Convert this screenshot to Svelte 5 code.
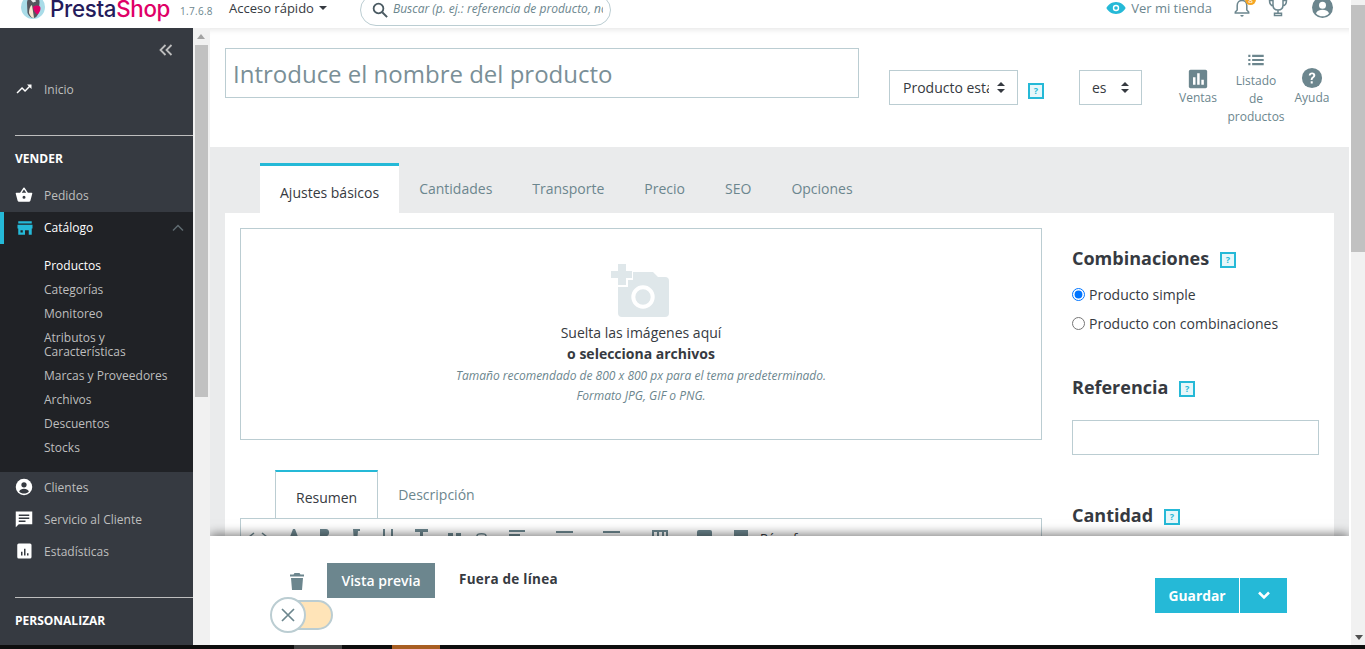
<script>
  const tabs = ['Cantidades', 'Transporte', 'Precio', 'SEO', 'Opciones'];
  const sub = ['Categorías', 'Monitoreo', 'Atributos y Características', 'Marcas y Proveedores', 'Archivos', 'Descuentos', 'Stocks'];
</script>

<div class="page">
  <div class="window">
    <div class="app">
      <header class="top">
        <div class="logo">
          <svg width="24" height="24" viewBox="0 0 24 24"><circle cx="12" cy="12" r="12" fill="#a9dce8"/><path d="M6 8c0-4 3-7 6.500-7S19 4 18.500 8l-1 10c-1 3-3 5-5 5s-5-2-6-5z" fill="#55565e"/><path d="M8 18c0-4 1-7 3-8l2 13c-2 0-4-2-5-5z" fill="#f6e7cf"/><path d="M12 12c2-2 5-2 7-.5 1 2 .500 5-2.500 8-2-1-4-4-4.500-7.500z" fill="#df0067"/><path d="M9 4h5l1 2.500-3 1z" fill="#ececec"/></svg>
          <span class="brand"><b class="p">Presta</b><b class="s">Shop</b></span>
        </div>
        <span class="ver">1.7.6.8</span>
        <span class="quick">Acceso rápido<i class="caret"></i></span>
        <div class="search">
          <svg width="18" height="18" viewBox="0 0 24 24"><circle cx="10" cy="10" r="6.500" fill="none" stroke="#4a5a62" stroke-width="2.400"/><path d="M15 15l6.500 6.500" stroke="#4a5a62" stroke-width="2.600"/></svg>
          <span class="sq">Buscar (p. ej.: referencia de producto, nombre de cliente...)</span>
        </div>
        <div class="top-right">
          <svg class="eye" width="20" height="14" viewBox="0 0 20 14"><path d="M10 1C5.500 1 2 3.800.4 7 2 10.200 5.500 13 10 13s8-2.800 9.600-6C18 3.800 14.500 1 10 1z" fill="#25b9d7"/><circle cx="10" cy="7" r="3.200" fill="#fff"/><circle cx="10" cy="7" r="1.800" fill="#25b9d7"/></svg>
          <span class="view">Ver mi tienda</span>
          <span class="bell">
            <svg width="18" height="20" viewBox="0 0 18 20"><path d="M9 2.500c-3 0-4.800 2.300-4.800 5v4.500L2.300 14v1h13.400v-1l-1.900-2V7.500c0-2.700-1.800-5-4.800-5z" fill="none" stroke="#6c868e" stroke-width="1.500"/><path d="M7.300 17h3.400a1.700 1.700 0 0 1-3.400 0z" fill="#6c868e"/></svg>
            <em>8</em>
          </span>
          <svg class="trophy" width="20" height="19" viewBox="0 0 20 19"><path d="M5 1h10v6c0 3-2 5-5 5s-5-2-5-5z M5 2.500H1.500c0 3 1 5 3.800 5.500 M15 2.500h3.500c0 3-1 5-3.800 5.500 M10 12v3 M6.500 17.500v-2.300h7v2.300z" fill="none" stroke="#6c868e" stroke-width="1.500"/></svg>
          <svg class="user" width="21" height="21" viewBox="0 0 24 24"><circle cx="12" cy="12" r="12" fill="#6c868e"/><circle cx="12" cy="9.500" r="4" fill="#fff"/><path d="M4.500 18.500c1.500-3 4.500-4 7.500-4s6 1 7.500 4C17.500 21 15 22 12 22s-5.500-1-7.500-3.500z" fill="#fff"/></svg>
        </div>
      </header>

      <div class="body">
        <aside class="side">
          <div class="collapse">
            <svg width="14" height="12" viewBox="0 0 14 12"><path d="M6.500 1L1.500 6l5 5M12.500 1l-5 5 5 5" fill="none" stroke="#bebebe" stroke-width="1.800"/></svg>
          </div>
          <div class="item first">
            <svg width="18" height="18" viewBox="0 0 24 24"><path d="M16 6l2.300 2.300-4.900 4.900-4-4L2 16.600 3.400 18l6-6 4 4 6.300-6.300L22 12V6z" fill="#fff"/></svg>
            <span>Inicio</span>
          </div>
          <div class="rule"></div>
          <h3 class="sect">VENDER</h3>
          <div class="item">
            <svg width="18" height="18" viewBox="0 0 24 24"><path d="M17.200 9l-4.400-6.600a1 1 0 0 0-1.600 0L6.800 9H2a1 1 0 0 0-1 1.300l2.500 9.200A2 2 0 0 0 5.500 21h13a2 2 0 0 0 2-1.500l2.500-9.200A1 1 0 0 0 22 9zM9 9l3-4.400L15 9zm3 8a2 2 0 1 1 0-4 2 2 0 0 1 0 4z" fill="#fff"/></svg>
            <span>Pedidos</span>
          </div>
          <div class="active">
            <div class="item cat">
              <svg width="18" height="18" viewBox="0 0 24 24"><path d="M3 3h18v3H3zM2 7.500h20v5h-1V21h-4v-6h-5v6H3v-8.500H2zM6 15v3h3v-3z" fill="#25b9d7" fill-rule="evenodd"/></svg>
              <span>Catálogo</span>
              <svg class="up" width="12" height="8" viewBox="0 0 12 8"><path d="M1 6.500l5-5 5 5" fill="none" stroke="#5f6b70" stroke-width="1.500"/></svg>
            </div>
            <ul class="sub">
              <li class="cur">Productos</li>
              {#each sub as s}<li>{s}</li>{/each}
            </ul>
          </div>
          <div class="item tight">
            <svg width="18" height="18" viewBox="0 0 24 24"><circle cx="12" cy="12" r="11" fill="#fff"/><circle cx="12" cy="9" r="3.500" fill="#363a41"/><path d="M5.500 18c1-2.800 3.500-3.800 6.500-3.800s5.500 1 6.500 3.800c-1.600 1.800-3.800 2.800-6.500 2.800S7.100 19.800 5.500 18z" fill="#363a41"/></svg>
            <span>Clientes</span>
          </div>
          <div class="item tight">
            <svg width="18" height="18" viewBox="0 0 24 24"><path d="M1 2h22v17H5l-4 4z" fill="#fff"/><path d="M5 7h14M5 11h14M5 15h9" stroke="#363a41" stroke-width="2"/></svg>
            <span>Servicio al Cliente</span>
          </div>
          <div class="item tight">
            <svg width="18" height="18" viewBox="0 0 24 24"><rect x="3" y="2" width="19" height="20" rx="2" fill="#fff"/><path d="M8 13h2v5H8zM12 9h2v9h-2zM16 15h2v3h-2z" fill="#363a41"/></svg>
            <span>Estadísticas</span>
          </div>
          <div class="rule r2"></div>
          <h3 class="sect">PERSONALIZAR</h3>
        </aside>

        <div class="side-scroll">
          <i class="arrow"></i>
          <div class="thumb"></div>
        </div>

        <main class="main">
          <div class="head">
            <div class="name">Introduce el nombre del producto</div>
            <div class="sel s1"><span class="clip">Producto estándar</span><i class="updown"></i></div>
            <span class="help h-top">?</span>
            <div class="sel s2"><span>es</span><i class="updown"></i></div>
            <div class="tools">
              <div class="tool t1">
                <svg width="20" height="20" viewBox="0 0 24 24"><rect x="1" y="1" width="22" height="22" rx="2" fill="#6c868e"/><path d="M6 10h3v9H6zM11 5h3v14h-3zM16 13h3v6h-3z" fill="#fff"/></svg>
                <span>Ventas</span>
              </div>
              <div class="tool t2">
                <svg width="20" height="12" viewBox="0 0 20 14"><path d="M1 1h2.500v2.500H1zM5.500 1H19v2.500H5.500zM1 5.800h2.500v2.500H1zM5.500 5.800H19v2.500H5.500zM1 10.500h2.500V13H1zM5.500 10.500H19V13H5.500z" fill="#6c868e"/></svg>
                <span class="stack">Listado de productos</span>
              </div>
              <div class="tool t3">
                <svg width="22" height="22" viewBox="0 0 24 24"><circle cx="12" cy="12" r="11" fill="#6c868e"/><path d="M8.500 9.300c0-2 1.500-3.300 3.600-3.300 2 0 3.500 1.200 3.500 3 0 2.700-3 2.700-3 5.300h-2c0-3.400 2.800-3.400 2.800-5.200 0-.8-.6-1.300-1.400-1.300-.9 0-1.500.6-1.500 1.500zM10.600 15.500h2.200v2.400h-2.200z" fill="#fff"/></svg>
                <span>Ayuda</span>
              </div>
            </div>
          </div>

          <div class="tabs-zone">
            <nav class="tabs">
              <span class="tab on">Ajustes básicos</span>
              {#each tabs as t}<span class="tab">{t}</span>{/each}
            </nav>
            <div class="card">
              <div class="left">
                <div class="drop">
                  <svg class="cam" width="60" height="54" viewBox="0 0 60 54"><path d="M23 8H43L48 13H55a4 4 0 0 1 4 4V49a4 4 0 0 1-4 4H12a4 4 0 0 1-4-4V23H18V16H23z" fill="#dfe7ea"/><path d="M8 0h8v7h6v7h-6v7H8v-7H1V7h7z" fill="#dfe7ea"/><circle cx="33" cy="33" r="9.700" fill="none" stroke="#fff" stroke-width="4"/></svg>
                  <p class="d1">Suelta las imágenes aquí</p>
                  <p class="d2">o selecciona archivos</p>
                  <p class="d3">Tamaño recomendado de 800 x 800 px para el tema predeterminado.</p>
                  <p class="d4">Formato JPG, GIF o PNG.</p>
                </div>
                <div class="subtabs">
                  <span class="stab on">Resumen</span>
                  <span class="stab">Descripción</span>
                </div>
                <div class="editor">
                  <svg width="760" height="20" viewBox="0 0 760 20">
                    <g fill="#6c868e" stroke="none">
                      <path d="M13 9l-5 4 5 4M21 9l5 4-5 4" fill="none" stroke="#6c868e" stroke-width="1.600"/>
                      <path d="M47 18l5-13h2l5 13h-2.500l-1-3h-5l-1 3z"/>
                      <path d="M79 5h6c4 0 4 6 1 7 3 1 3 6-1 6h-6z"/>
                      <path d="M112 5h7v2h-2l-1 11h-3z"/>
                      <path d="M142 5h2v9h6V5h2v13h-10z"/>
                      <path d="M174 5h13v3h-5v10h-3V8h-5z"/>
                      <path d="M207 9h5v6h-5zM215 9h5v6h-5z"/>
                      <path d="M236 12c0-3 9-3 9 0M236 15c0 3 9 3 9 0" fill="none" stroke="#6c868e" stroke-width="1.600"/>
                      <path d="M268 6h16v2h-16zM268 10h11v2h-11zM268 14h16v2h-16z"/>
                      <path d="M315 7h17v2h-17zM315 12h17v2h-17zM315 17h17v2h-17z"/>
                      <path d="M362 7h17v2h-17zM362 12h17v2h-17zM362 17h17v2h-17z"/>
                      <path d="M411 6h16v14h-16zM413 8v4h3V8zM418 8v4h3V8zM423 8v4h2V8z" fill-rule="evenodd"/>
                      <rect x="456" y="6" width="15" height="14" rx="2"/>
                      <path d="M488 12h3v8h-3zM493 6h14v14h-14z"/>
                    </g>
                    <text x="519" y="19" font-family="Open Sans" font-size="13" fill="#363a41">Párrafo</text>
                  </svg>
                </div>
              </div>
              <div class="right">
                <h2 class="h1c">Combinaciones <span class="help">?</span></h2>
                <label class="radio"><input type="radio" name="t" checked /> Producto simple</label>
                <label class="radio"><input type="radio" name="t" /> Producto con combinaciones</label>
                <h2 class="h2c">Referencia <span class="help">?</span></h2>
                <div class="ref"></div>
                <h2 class="h3c">Cantidad <span class="help">?</span></h2>
              </div>
            </div>
          </div>

          <footer class="foot">
            <div class="foot-left">
              <div class="foot-row">
                <svg class="trash" width="14" height="17" viewBox="0 0 14 17"><path d="M4.500 0h5l1 1.500H14v2H0v-2h3.500zM1 5h12l-1 12H2z" fill="#6c868e"/></svg>
                <span class="preview">Vista previa</span>
                <span class="off">Fuera de línea</span>
              </div>
              <div class="switch">
                <span class="knob">
                  <svg width="16" height="16" viewBox="0 0 16 16"><path d="M2 2l12 12M14 2L2 14" stroke="#6c868e" stroke-width="1.700"/></svg>
                </span>
              </div>
            </div>
            <div class="save">
              <span class="sv">Guardar</span>
              <span class="dd"><svg width="14" height="9" viewBox="0 0 14 9"><path d="M2 1.500l5 5 5-5" fill="none" stroke="#fff" stroke-width="2.500"/></svg></span>
            </div>
          </footer>
        </main>
      </div>
    </div>

    <div class="page-scroll">
      <div class="pthumb"></div>
      <i class="darrow"></i>
    </div>
  </div>

  <div class="taskbar">
    <i class="tk a"></i><i class="tk b"></i>
  </div>
</div>

<style>
  :global(body) { margin: 0; background: #fff; }
  :global(*) { box-sizing: border-box; }
  .page { width: 1365px; height: 649px; overflow: hidden; display: flex; flex-direction: column; font-family: "Open Sans", sans-serif; color: #363a41; font-size: 13px; }
  .window { flex: 1; display: flex; min-height: 0; }
  .app { flex: 1; display: flex; flex-direction: column; min-width: 0; }
  .taskbar { height: 4px; background: #0e0e0e; display: flex; flex: none; }
  .tk { display: block; height: 4px; }
  .tk.a { width: 48px; margin-left: 294px; background: #444; }
  .tk.b { width: 48px; margin-left: 50px; background: #a85e22; }

  .top { height: 28px; flex: none; display: flex; align-items: center; background: #fff; overflow: hidden; position: relative; z-index: 2; }
  .logo { display: flex; align-items: center; margin-left: 21px; height: 28px; width: 157px; flex: none; overflow: hidden; }
  .logo svg { flex: none; width: 24px; height: 24px; margin-top: -14px; }
  .brand { font-family: "Inter", "Liberation Sans", sans-serif; font-size: 22.300px; margin-left: 5px; margin-top: -11px; letter-spacing: -.3px; white-space: nowrap; }
  .brand b { font-weight: 500; }
  .p { color: #251b5b; }
  .s { color: #df0067; }
  .ver { font-size: 10px; color: #6c868e; width: 49px; flex: none; margin-left: 2px; margin-top: -7px; letter-spacing: .3px; }
  .quick { font-size: 13px; color: #363a41; width: 131px; flex: none; margin-top: -13px; display: flex; align-items: center; }
  .caret { display: inline-block; margin-left: 5px; margin-top: 1px; border: 4px solid transparent; border-top: 4px solid #363a41; border-bottom: 0; }
  .search { width: 251px; height: 32px; margin-top: -8px; flex: none; border: 1px solid #bbcdd2; border-radius: 16px; display: flex; align-items: center; padding: 3px 10px 0 10px; gap: 4px; overflow: hidden; }
  .search svg { flex: none; margin-top: -3px; }
  .sq { font-style: italic; font-size: 12px; color: #6c868e; white-space: nowrap; overflow: hidden; width: 210px; margin-top: -6px; flex: none; }
  .top-right { margin-left: auto; display: flex; align-items: center; margin-top: -13px; }
  .eye { margin-right: 5px; }
  .view { color: #6c868e; font-size: 13px; margin-right: 21px; }
  .bell { position: relative; width: 18px; height: 20px; margin-right: 17px; display: block; }
  .bell em { position: absolute; top: -4px; right: -5px; width: 11px; height: 11px; border-radius: 50%; background: #f5a623; color: #fff; font-size: 8px; line-height: 11px; text-align: center; font-style: normal; }
  .trophy { margin-right: 24px; }
  .user { margin-right: 16px; }

  .body { flex: 1; display: flex; min-height: 0; position: relative; }
  .side { width: 193px; flex: none; background: #363a41; overflow: hidden; color: #bebebe; }
  .collapse { height: 45px; padding: 16px 0 0 159px; line-height: 0; }
  .item { display: flex; align-items: center; height: 32px; padding-left: 15px; font-size: 12px; gap: 11px; }
  .item.first { margin-bottom: 30px; }
  .rule { height: 1px; background: #bebebe; margin-left: 15px; }
  .rule.r2 { margin-top: 29px; }
  .sect { margin: 0; font-size: 12px; font-weight: 700; color: #fff; padding: 14px 0 0 15px; height: 43px; line-height: 17px; }
  .active { background: #202226; margin-top: 1px; padding-bottom: 12px; }
  .cat { color: #fff; border-left: 4px solid #25b9d7; padding-left: 12px; padding-bottom: 1px; }
  .cat .up { margin-left: auto; margin-right: 9px; }
  .cat span { margin-left: -1px; }
  .sub { list-style: none; margin: 10px 0 0; padding: 0 8px 0 44px; }
  .sub li { font-size: 12px; line-height: 14px; padding: 5px 0; color: #bebebe; }
  .sub li.cur { color: #fff; }
  .tight { padding-bottom: 2px; }

  .side-scroll { width: 17px; flex: none; background: #f1f1f1; position: relative; padding: 17px 2px 0 2px; }
  .arrow { position: absolute; top: 6px; left: 4px; border: 4px solid transparent; border-bottom: 5px solid #a3a3a3; border-top: 0; }
  .thumb { height: 352px; background: #c1c1c1; }

  .main { flex: 1; min-width: 0; position: relative; overflow: hidden; background: #eaebec; display: flex; flex-direction: column; }
  .head { height: 119px; flex: none; background: #fff; display: flex; padding-top: 20px; box-shadow: inset 0 7px 6px -6px rgba(0,0,0,.12); }
  .name { width: 634px; height: 50px; margin-left: 15px; border: 1px solid #bbcdd2; font-size: 24px; color: #7a8f97; line-height: 50px; padding-left: 7px; white-space: nowrap; }
  .sel { margin-top: 22px; height: 35px; border: 1px solid #bbcdd2; font-size: 14px; display: flex; align-items: center; position: relative; }
  .s1 { width: 129px; margin-left: 30px; padding-left: 13px; }
  .clip { display: block; width: 86px; overflow: hidden; white-space: nowrap; }
  .s2 { width: 63px; margin-left: 35px; padding-left: 12px; }
  .updown { position: absolute; right: 12px; top: 11px; width: 8px; height: 11px; }
  .updown::before { content: ""; position: absolute; top: 0; left: 0; border: 4px solid transparent; border-bottom: 4px solid #363a41; border-top: 0; }
  .updown::after { content: ""; position: absolute; bottom: 0; left: 0; border: 4px solid transparent; border-top: 4px solid #363a41; border-bottom: 0; }
  .help { display: inline-block; width: 16px; height: 16px; border: 2px solid #25b9d7; background: #e6f7fa; color: #25b9d7; font-size: 9px; font-weight: 700; line-height: 12px; text-align: center; vertical-align: middle; font-family: "Open Sans", sans-serif; }
  .h-top { margin: 35px 0 0 10px; flex: none; }
  .tools { display: flex; color: #6c868e; font-size: 12px; }
  .tool { display: flex; flex-direction: column; align-items: center; text-align: center; line-height: 18px; }
  .tool span { display: block; }
  .stack { width: min-content; }
  .t1 { width: 56px; margin: 21px 0 0 28px; }
  .t2 { width: 58px; margin: 6px 0 0 1px; }
  .t2 svg { margin-bottom: 6px; }
  .t3 { width: 50px; margin: 19px 0 0 2px; }

  .tabs-zone { flex: 1; padding: 16px 15px 0 15px; min-height: 0; }
  .tabs { display: flex; padding-left: 35px; height: 50px; }
  .tab { padding: 0 20px; font-size: 14px; color: #6c868e; line-height: 51px; }
  .tab.on { background: #fff; color: #363a41; border-top: 3px solid #25b9d7; line-height: 53px; height: 50px; }
  .card { background: #fff; display: flex; padding: 15px; height: 400px; }
  .left { width: 802px; flex: none; }
  .drop { height: 212px; border: 1px solid #bbcdd2; display: flex; flex-direction: column; align-items: center; padding-top: 35px; }
  .cam { flex: none; margin-left: -3px; }
  .drop p { margin: 0; }
  .drop .d1 { font-size: 14px; line-height: 20px; margin-top: 5px; color: #363a41; }
  .drop .d2 { font-size: 14px; line-height: 20px; font-weight: 700; margin-top: 1px; }
  .drop .d3, .drop .d4 { font-size: 12px; font-style: italic; color: #6c868e; line-height: 20px; }
  .drop .d3 { margin-top: 2px; }
  .subtabs { margin-top: 30px; padding-left: 35px; display: flex; height: 49px; }
  .stab { padding: 0 20px; font-size: 14px; color: #6c868e; line-height: 50px; }
  .stab.on { background: #fff; color: #363a41; border: 1px solid #bbcdd2; border-bottom: 0; border-top: 2px solid #25b9d7; line-height: 51px; height: 48px; padding: 0 20px; position: relative; z-index: 1; }
  .editor { border: 1px solid #bbcdd2; margin-top: -1px; height: 100px; padding-top: 5px; }
  .editor svg { display: block; }

  .right { flex: 1; padding-left: 30px; }
  h2 { margin: 0; font-size: 18px; font-weight: 700; color: #363a41; line-height: 24px; white-space: nowrap; }
  h2 .help { margin-left: 6px; margin-top: -1px; }
  .h1c { padding-top: 18px; margin-bottom: 10px; }
  .radio { display: flex; align-items: center; font-size: 14px; height: 29px; color: #363a41; }
  .radio input { margin: 0 4px 0 0; width: 13px; height: 13px; }
  .h2c { margin-top: 37px; margin-bottom: 21px; }
  .ref { height: 35px; width: 247px; border: 1px solid #bbcdd2; }
  .h3c { margin-top: 48px; }

  .foot { position: absolute; left: 0; right: 0; bottom: 0; height: 109px; background: #fff; box-shadow: 0 -2px 10px rgba(0,0,0,.5); display: flex; justify-content: space-between; }
  .foot-left { padding-left: 60px; padding-top: 27px; }
  .foot-row { display: flex; align-items: flex-start; margin-left: 20px; }
  .trash { margin-top: 10px; margin-right: 23px; }
  .preview { width: 108px; height: 35px; background: #6c868e; color: #fff; font-weight: 600; font-size: 14px; text-align: center; line-height: 36px; }
  .off { font-weight: 700; font-size: 13.500px; margin-left: 24px; margin-top: 7px; letter-spacing: .25px; }
  .switch { width: 61px; height: 30px; margin: 2px 0 0 2px; background: #ffe4b8; border: 2px solid #bbcdd2; border-radius: 15px; position: relative; }
  .knob { position: absolute; left: -4px; top: -5px; width: 36px; height: 36px; background: #fff; border: 2px solid #bbcdd2; border-radius: 50%; display: flex; align-items: center; justify-content: center; }
  .save { display: flex; margin: 42px 62px 0 0; height: 35px; color: #fff; }
  .sv { width: 84px; background: #25b9d7; font-weight: 700; font-size: 13.800px; text-align: center; line-height: 35px; }
  .dd { width: 47px; margin-left: 1px; background: #25b9d7; display: flex; align-items: center; justify-content: center; }

  .page-scroll { width: 16px; flex: none; background: #f1f1f1; position: relative; padding-top: 5px; border-left: 2px solid #fff; }
  .pthumb { height: 247px; background: #c1c1c1; }
  .darrow { position: absolute; bottom: 5px; left: 4px; border: 4px solid transparent; border-top: 5px solid #505050; border-bottom: 0; }
</style>
